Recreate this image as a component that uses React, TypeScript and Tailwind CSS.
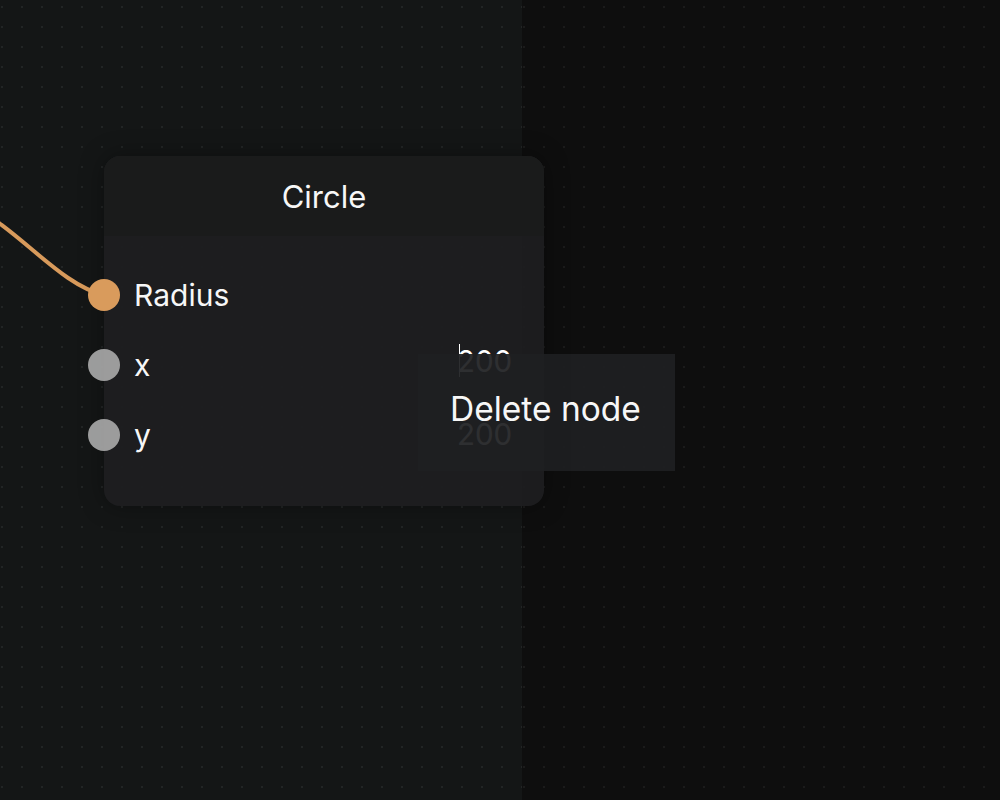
import React from "react";

const font = { fontFamily: "Inter, 'Noto Sans', sans-serif" };

function Row({ label, active, value, focused }: { label: string; active?: boolean; value?: string; focused?: boolean }) {
  return (
    <div className="relative flex h-[70px] items-center pl-[30px] pr-[30px]">
      <div
        className={`absolute left-[-16px] top-1/2 h-8 w-8 -translate-y-1/2 rounded-full ${
          active ? "bg-[#d99b5c]" : "bg-[#a3a3a3]/95"
        }`}
      />
      <span className="flex-1 text-[30px] leading-none text-[#f7f7f7]">{label}</span>
      {value !== undefined && (
        <div
          className={`relative w-[57px] text-left text-[29.5px] leading-none text-white ${
            focused ? "mb-[7px]" : "mb-[0px]"
          }`}
        >
          {focused && <span className="absolute left-[2px] top-[-3px] h-[33px] w-[1px] bg-white" />}
          <span>{value}</span>
        </div>
      )}
    </div>
  );
}

export default function App() {
  return (
    <div className="relative h-[800px] w-[1000px] overflow-hidden" style={font}>
      <div className="flex h-full w-full">
        <div className="h-full w-[522px] bg-[#141616] bg-[radial-gradient(circle,#222525_1.2px,transparent_1.5px)] bg-[size:20px_20px] bg-[position:-8px_-3px]" />
        <div className="h-full flex-1 bg-[#0e0e0e] bg-[radial-gradient(circle,#1b1b1b_1.2px,transparent_1.5px)] bg-[size:20px_20px] bg-[position:-8px_-3px]" />
      </div>

      <svg className="absolute left-0 top-0" width="1000" height="800">
        <path d="M -30 205 C 20 230, 60 285, 104 295" fill="none" stroke="#d89a5b" strokeWidth="4" />
      </svg>

      <div className="absolute left-[104px] top-[156px] flex h-[350px] w-[440px] flex-col rounded-2xl bg-[#1d1e20]/95 shadow-[0_0_24px_rgba(0,0,0,0.35)]">
        <div className="flex h-[80px] items-center justify-center rounded-t-2xl bg-[#1a1b1b]/95">
          <span className="text-[31px] leading-none text-[#f7f7f7]">Circle</span>
        </div>
        <div className="flex flex-col pt-[24px]">
          <Row label="Radius" active />
          <Row label="x" value="200" focused />
          <Row label="y" value="200" />
        </div>
      </div>

      <div className="absolute left-[418px] top-[354px] flex h-[117px] w-[257px] items-center bg-[#1e1f21]/[0.93] pb-[6px] pl-[32px]">
        <span className="text-[33.5px] leading-none text-[#f7f7f7]">Delete node</span>
      </div>
    </div>
  );
}
